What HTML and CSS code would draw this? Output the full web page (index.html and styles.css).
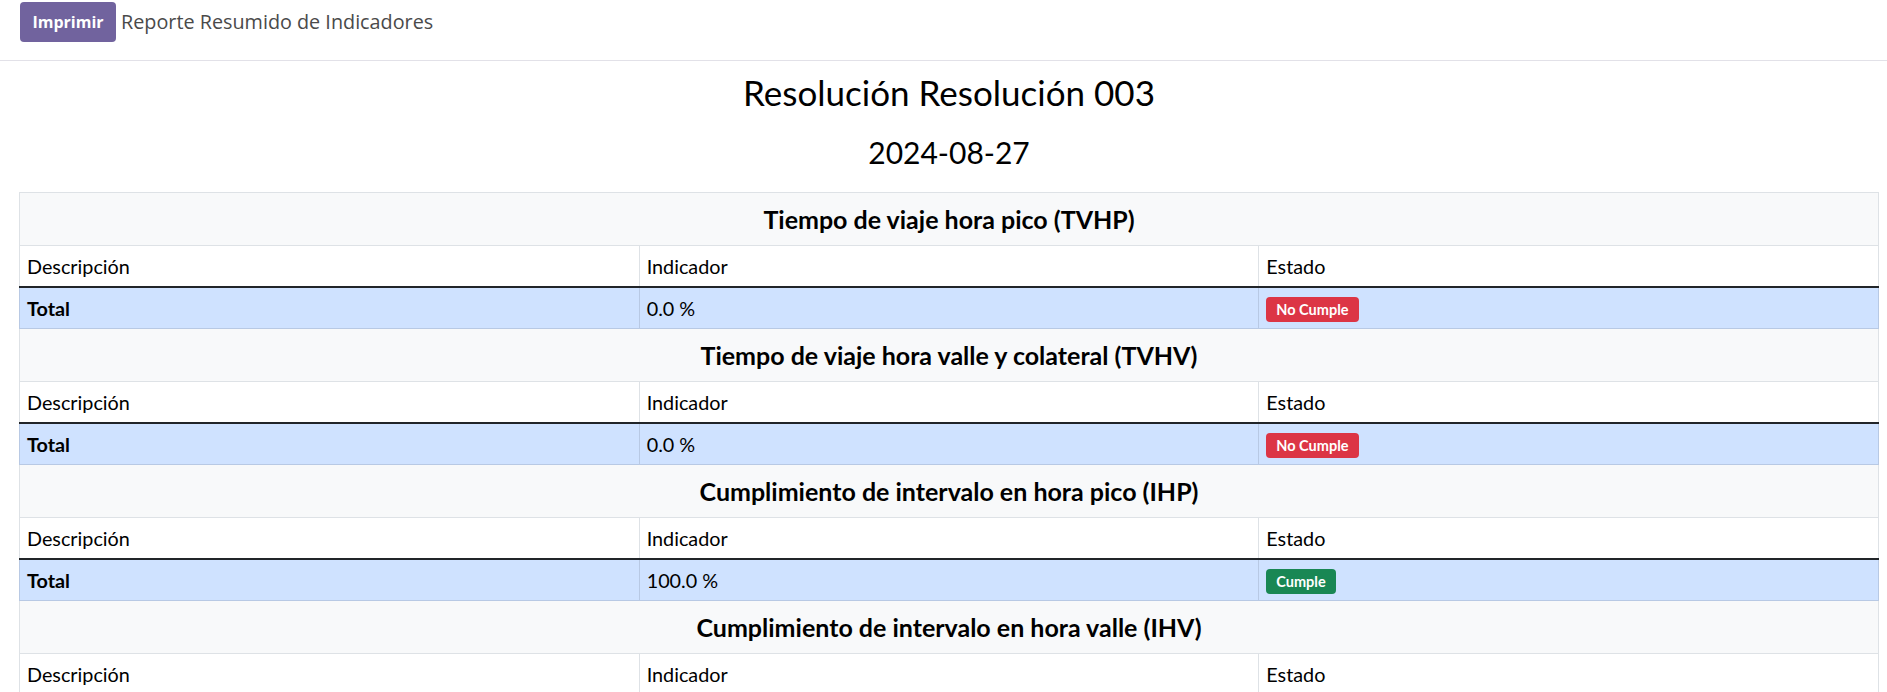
FILE: index.html
```html
<!DOCTYPE html>
<html lang="es">
<head>
<meta charset="utf-8">
<title>Reporte Resumido de Indicadores</title>
<link rel="stylesheet" href="styles.css">
</head>
<body>
<header class="topbar">
  <button class="btn-print" type="button">Imprimir</button>
  <span class="topbar-title">Reporte Resumido de Indicadores</span>
</header>
<main class="report">
  <h2 class="report-title">Resolución Resolución 003</h2>
  <h3 class="report-date">2024-08-27</h3>
  <table class="ind-table">
    <colgroup><col class="c1"><col class="c2"><col class="c3"></colgroup>
    <tbody>
      <tr class="sec"><th colspan="3">Tiempo de viaje hora pico (TVHP)</th></tr>
      <tr class="head"><td>Descripción</td><td>Indicador</td><td>Estado</td></tr>
      <tr class="total"><td class="lbl">Total</td><td>0.0 %</td><td><span class="badge bad">No Cumple</span></td></tr>

      <tr class="sec"><th colspan="3">Tiempo de viaje hora valle y colateral (TVHV)</th></tr>
      <tr class="head"><td>Descripción</td><td>Indicador</td><td>Estado</td></tr>
      <tr class="total"><td class="lbl">Total</td><td>0.0 %</td><td><span class="badge bad">No Cumple</span></td></tr>

      <tr class="sec"><th colspan="3">Cumplimiento de intervalo en hora pico (IHP)</th></tr>
      <tr class="head"><td>Descripción</td><td>Indicador</td><td>Estado</td></tr>
      <tr class="total"><td class="lbl">Total</td><td>100.0 %</td><td><span class="badge good">Cumple</span></td></tr>

      <tr class="sec"><th colspan="3">Cumplimiento de intervalo en hora valle (IHV)</th></tr>
      <tr class="head"><td>Descripción</td><td>Indicador</td><td>Estado</td></tr>
      <tr class="total"><td class="lbl">Total</td><td>100.0 %</td><td><span class="badge good">Cumple</span></td></tr>
    </tbody>
  </table>
</main>
</body>
</html>
```
FILE: styles.css
```css
html, body {
  margin: 0;
  padding: 0;
  background: #fff;
}
body {
  font-family: Lato, "Liberation Sans", sans-serif;
  color: #000;
  overflow: hidden;
}
.topbar {
  display: flex;
  align-items: flex-start;
  gap: 5px;
  height: 61px;
  padding: 2px 0 0 20px;
  box-sizing: border-box;
  border-bottom: 1px solid #e2e1e8;
}
.btn-print {
  height: 40px;
  width: 96px;
  border: none;
  border-radius: 4px;
  background: #71639e;
  color: #fff;
  font-family: "Open Sans", "Noto Sans", sans-serif;
  font-weight: 700;
  font-size: 16px;
  padding: 0;
  cursor: pointer;
}
.topbar-title {
  line-height: 40px;
  font-family: "Open Sans", "Noto Sans", sans-serif;
  font-size: 19.8px;
  color: #4a4a4a;
}
.report {
  padding: 0 8px 0 19px;
}
.report-title {
  margin: 0;
  padding-top: 10px;
  text-align: center;
  font-weight: 400;
  font-size: 35px;
  line-height: 42px;
}
.report-date {
  margin: 0;
  padding-top: 21px;
  text-align: center;
  font-weight: 400;
  font-size: 30px;
  line-height: 36px;
}
.ind-table {
  margin-top: 22px;
  width: 1860px;
  border-collapse: collapse;
  table-layout: fixed;
  border-top: 1px solid #7d7d7d;
  border-left: 1px solid #7d7d7d;
  border-right: 1px solid #7d7d7d;
  font-size: 19.8px;
}
.ind-table td, .ind-table th {
  border: 1px solid #dee2e6;
  padding: 0 7px;
  text-align: left;
  vertical-align: middle;
}
.ind-table tr.sec th {
  background: #f8f9fa;
  text-align: center;
  font-weight: 700;
  font-size: 25px;
  height: 52px;
}
.ind-table tr.head td {
  background: #fff;
  height: 40px;
  border-bottom: 2px solid #212529;
}
.ind-table tr.total td {
  background: #cfe2ff;
  height: 40px;
  border-color: #b8c9e4;
}
.ind-table tr.total td.lbl {
  font-weight: 700;
}
.badge {
  display: inline-block;
  padding: 0 10px;
  height: 25px;
  line-height: 25px;
  border-radius: 4px;
  color: #fff;
  font-weight: 700;
  font-size: 14.5px;
  vertical-align: middle;
}
.badge.bad { background: #dc3545; }
.badge.good { background: #198754; }
```
